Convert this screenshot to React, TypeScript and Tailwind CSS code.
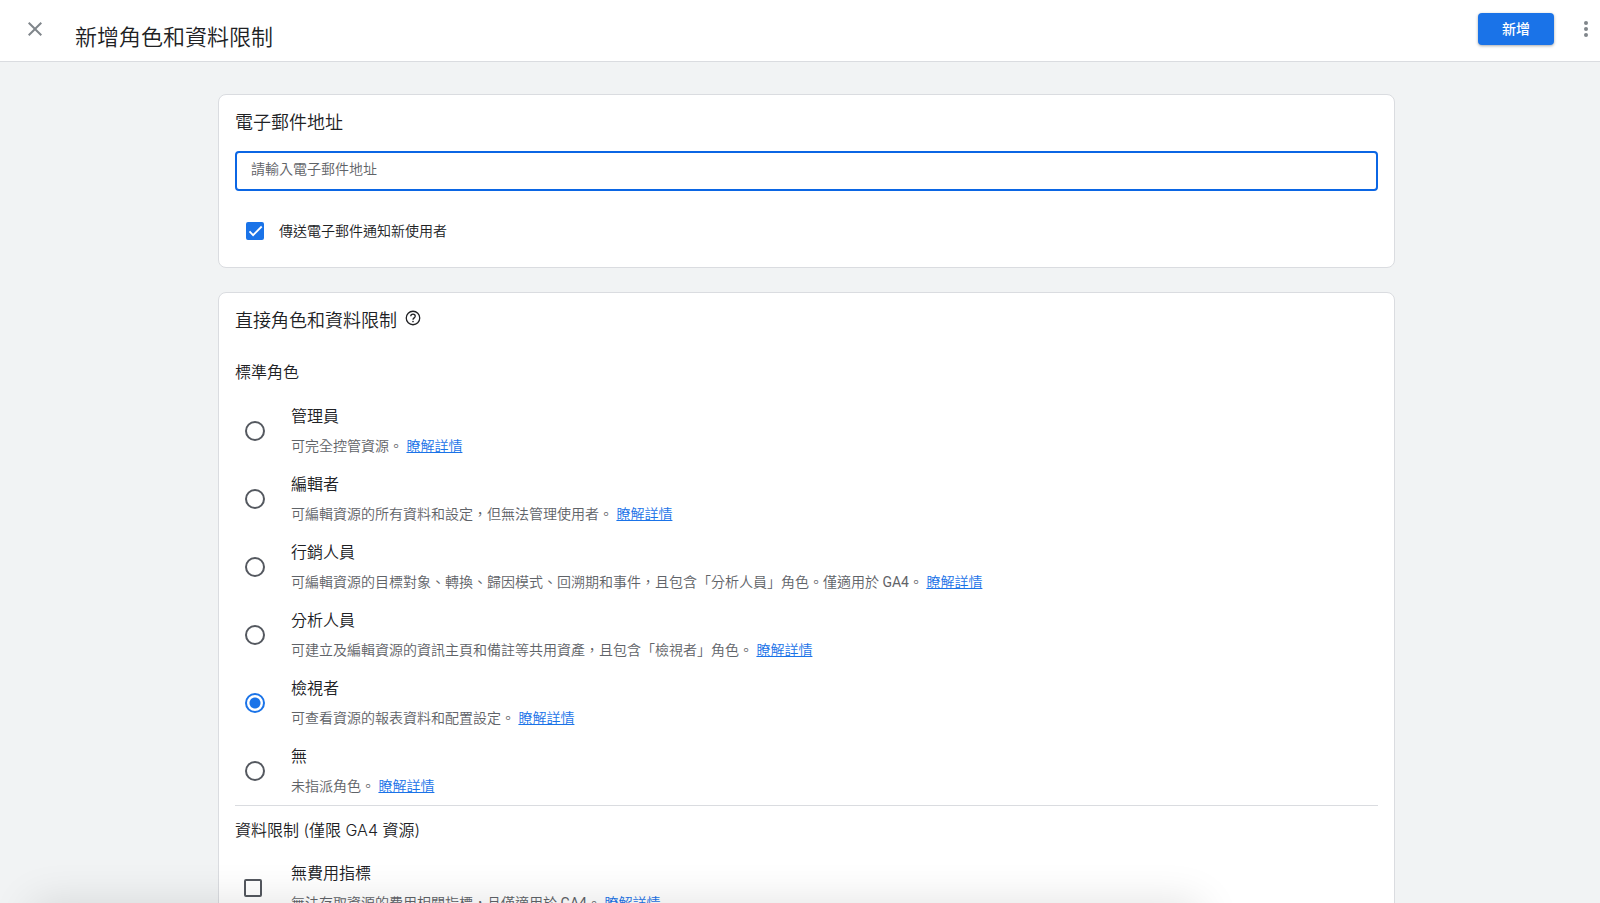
import { useState, type ReactNode } from "react";

const ga4 = <span className="font-normal">GA4</span>;

const roles: { id: string; name: string; desc: ReactNode }[] = [
  { id: "admin", name: "管理員", desc: "可完全控管資源。" },
  { id: "editor", name: "編輯者", desc: "可編輯資源的所有資料和設定，但無法管理使用者。" },
  {
    id: "marketer",
    name: "行銷人員",
    desc: <>可編輯資源的目標對象、轉換、歸因模式、回溯期和事件，且包含「分析人員」角色。僅適用於 {ga4}。</>,
  },
  {
    id: "analyst",
    name: "分析人員",
    desc: "可建立及編輯資源的資訊主頁和備註等共用資產，且包含「檢視者」角色。",
  },
  { id: "viewer", name: "檢視者", desc: "可查看資源的報表資料和配置設定。" },
  { id: "none", name: "無", desc: "未指派角色。" },
];

const restrictions: { id: string; name: string; desc: ReactNode }[] = [
  { id: "no-cost", name: "無費用指標", desc: <>無法存取資源的費用相關指標，且僅適用於 {ga4}。</> },
];

function CloseIcon() {
  return (
    <svg width="24" height="24" viewBox="0 0 24 24" fill="currentColor" aria-hidden="true">
      <path d="M19 6.41L17.59 5 12 10.59 6.41 5 5 6.41 10.59 12 5 17.59 6.41 19 12 13.41 17.59 19 19 17.59 13.41 12z" />
    </svg>
  );
}

function MoreIcon() {
  return (
    <svg width="24" height="24" viewBox="0 0 24 24" fill="currentColor" aria-hidden="true">
      <circle cx="12" cy="6" r="2" />
      <circle cx="12" cy="12" r="2" />
      <circle cx="12" cy="18" r="2" />
    </svg>
  );
}

function HelpIcon() {
  return (
    <svg width="18" height="18" viewBox="0 0 24 24" fill="none" stroke="currentColor" strokeWidth="1.7" aria-hidden="true">
      <circle cx="12" cy="12" r="9" />
      <path d="M9 9.8a3 3 0 1 1 6 0c0 2-3 2.1-3 4.4" />
      <circle cx="12" cy="16.8" r="1.1" fill="currentColor" stroke="none" />
    </svg>
  );
}

function Checkbox({ id, checked, onChange }: { id: string; checked: boolean; onChange: (v: boolean) => void }) {
  return (
    <span className="grid size-[18px] shrink-0">
      <input
        id={id}
        type="checkbox"
        checked={checked}
        onChange={(e) => onChange(e.target.checked)}
        className="col-start-1 row-start-1 size-[18px] appearance-none rounded-xs border-2 border-[#54585f] checked:border-[#1a73e8] checked:bg-[#1a73e8]"
      />
      {checked && (
        <svg viewBox="0 0 18 18" className="pointer-events-none col-start-1 row-start-1 size-[18px]" aria-hidden="true">
          <path d="M3.5 9.4l3.6 3.7 8.6-8.6" fill="none" stroke="#fff" strokeWidth="1.8" />
        </svg>
      )}
    </span>
  );
}

function OptionText({ htmlFor, name, desc }: { htmlFor: string; name: string; desc: ReactNode }) {
  return (
    <div>
      <label htmlFor={htmlFor} className="block text-base leading-6">
        {name}
      </label>
      <p className="mt-[7px] text-sm leading-5 text-[#5f6368]">
        {desc}{" "}
        <a href="#" className="text-[#1a73e8] underline">
          瞭解詳情
        </a>
      </p>
    </div>
  );
}

export default function App() {
  const [email, setEmail] = useState("");
  const [notify, setNotify] = useState(true);
  const [role, setRole] = useState("viewer");
  const [limits, setLimits] = useState<string[]>([]);

  const toggleLimit = (id: string, on: boolean) => {
    setLimits((prev) => (on ? [...prev, id] : prev.filter((x) => x !== id)));
  };

  return (
    <div
      lang="zh-TW"
      className="flex h-screen flex-col overflow-hidden bg-[#f1f3f4] font-[Roboto,'Noto_Sans_CJK_TC',sans-serif] font-[350] text-[#202124]"
    >
      <header className="flex h-[62px] shrink-0 items-start border-b border-[#dadce0] bg-white pt-[13px] pr-0.5 pl-[23px]">
        <button type="button" aria-label="關閉" className="mt-1 text-[#80868b]">
          <CloseIcon />
        </button>
        <h1 className="mt-[9px] ml-7 text-[22px] leading-8">新增角色和資料限制</h1>
        <button
          type="button"
          className="ml-auto h-8 rounded-sm bg-[#1a73e8] px-6 text-sm font-medium text-white shadow-[0_1px_3px_rgba(60,64,67,0.45)]"
        >
          新增
        </button>
        <button type="button" aria-label="更多選項" className="mt-1 ml-5 text-[#80868b]">
          <MoreIcon />
        </button>
      </header>

      <main className="min-h-0 flex-1 overflow-hidden pt-8 pl-[13px]">
        <div className="mx-auto flex max-w-[1177px] flex-col gap-6">
          <section className="rounded-lg border border-[#dadce0] bg-white px-4 pt-4 pb-6">
            <h2 className="text-lg leading-6">
              <label htmlFor="email">電子郵件地址</label>
            </h2>
            <input
              id="email"
              type="email"
              value={email}
              onChange={(e) => setEmail(e.target.value)}
              placeholder="請輸入電子郵件地址"
              className="mt-4 block h-10 w-full rounded-sm border-2 border-[#0b66e4] px-3.5 pb-1 text-sm outline-none placeholder:text-[#5f6368]"
            />
            <div className="mt-7 flex items-center gap-[15px] pl-[11px]">
              <Checkbox id="notify" checked={notify} onChange={setNotify} />
              <label htmlFor="notify" className="text-sm leading-6">
                傳送電子郵件通知新使用者
              </label>
            </div>
          </section>

          <section className="rounded-t-lg border border-[#dadce0] bg-white px-4 pt-4 pb-6">
            <div className="flex items-start gap-[7px]">
              <h2 className="text-lg leading-6">直接角色和資料限制</h2>
              <button type="button" aria-label="說明">
                <HelpIcon />
              </button>
            </div>

            <h3 id="roles-title" className="mt-7 text-base leading-6">
              標準角色
            </h3>
            <div role="radiogroup" aria-labelledby="roles-title" className="mt-5 flex flex-col gap-[17px]">
              {roles.map((r) => (
                <div key={r.id} className="flex items-center gap-[26px] pl-2.5">
                  <input
                    id={r.id}
                    type="radio"
                    name="role"
                    checked={role === r.id}
                    onChange={() => setRole(r.id)}
                    className="size-5 shrink-0 appearance-none rounded-full border-2 border-[#54585f] checked:border-[#1a73e8] checked:bg-[radial-gradient(#1a73e8_5px,transparent_6px)]"
                  />
                  <OptionText htmlFor={r.id} name={r.name} desc={r.desc} />
                </div>
              ))}
            </div>

            <h3 className="mt-[9px] border-t border-[#dadce0] pt-3 font-[Inter,'Noto_Sans_CJK_TC',sans-serif] text-base leading-6">
              資料限制 (僅限 GA4 資源)
            </h3>
            <div className="mt-5 flex flex-col gap-[17px]">
              {restrictions.map((r) => (
                <div key={r.id} className="flex items-center gap-[29px] pl-[9px]">
                  <Checkbox id={r.id} checked={limits.includes(r.id)} onChange={(on) => toggleLimit(r.id, on)} />
                  <OptionText htmlFor={r.id} name={r.name} desc={r.desc} />
                </div>
              ))}
            </div>
          </section>
        </div>
      </main>

      {/* shadow of the notification bar tucked under the bottom edge */}
      <div className="pointer-events-none fixed top-full left-8 h-12 w-[73%] shadow-[0_0_44px_rgba(0,0,0,0.12)]" />
    </div>
  );
}
